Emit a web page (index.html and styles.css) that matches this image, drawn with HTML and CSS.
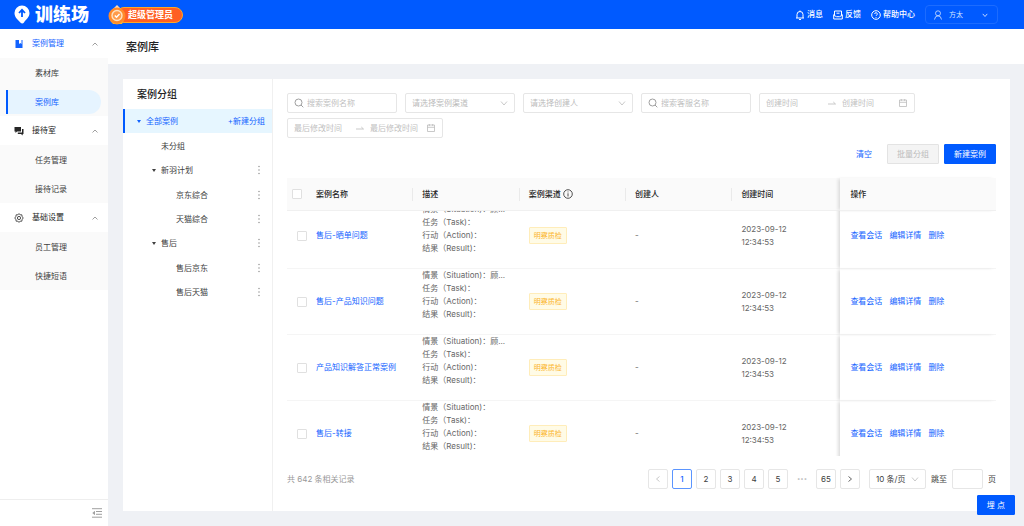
FILE: index.html
```html
<!DOCTYPE html>
<html lang="zh-CN">
<head>
<meta charset="utf-8">
<title>案例库</title>
<link rel="stylesheet" href="styles.css">
</head>
<body>
<svg class="defs" aria-hidden="true">
  <symbol id="i-up" viewBox="0 0 8 8"><path d="M1.500 5.500 4 3l2.500 2.500" /></symbol>
  <symbol id="i-down" viewBox="0 0 8 8"><path d="M1 2.500 4 6l3-3.500" /></symbol>
  <symbol id="i-left" viewBox="0 0 8 8"><path d="M5.500 1.500 2.500 4l3 2.500" /></symbol>
  <symbol id="i-right" viewBox="0 0 8 8"><path d="M2.500 1.500 5.500 4l-3 2.500" /></symbol>
  <symbol id="i-search" viewBox="0 0 10 10"><circle cx="4.500" cy="4.500" r="3.500" /><path d="M7 7l2.300 2.300" /></symbol>
  <symbol id="i-cal" viewBox="0 0 10 10"><path d="M1.500 2h7v6.500h-7zM1.500 4.300h7M3.300 1v2M6.700 1v2" /></symbol>
  <symbol id="i-arrow" viewBox="0 0 8 8"><path d="M0 5h7.500L5.300 3" /></symbol>
  <symbol id="i-more" viewBox="0 0 4 10"><circle cx="2" cy="1.500" r=".7" /><circle cx="2" cy="5" r=".7" /><circle cx="2" cy="8.500" r=".7" /></symbol>
</svg>

<header class="topbar">
  <div class="brand">
    <svg class="brand-mark" viewBox="0 0 16 20"><path fill="#fff" d="M8 .5A7.500 7.500 0 0 1 15.500 8c0 4.500-3.500 6-5.500 9.500-.8 1.300-2.500 1.300-3.400.3L3 14C1.500 12.300.5 10.500.5 8A7.500 7.500 0 0 1 8 .5z"/><path d="M8 12V5M5 8l3-3.200L11 8" fill="none" stroke="#005aff" stroke-width="1.800"/></svg>
    <span class="brand-name">训练场</span>
  </div>
  <div class="role">
    <svg class="role-medal" viewBox="0 0 18 20"><path fill="#ffd9b0" d="M9 0l4 4H5z"/><circle cx="9" cy="11" r="8.500" fill="#ff8a2b"/><path d="M2 15a8.500 8.500 0 0 0 14 0l-2 4H5z" fill="#ffb52e"/><circle cx="9" cy="10.500" r="5" fill="#ff9b4a" stroke="#ffe3c2" stroke-width="1.400"/><path d="M6.800 10.500l1.700 1.700 3-3.200" fill="none" stroke="#fff" stroke-width="1.400"/></svg>
    <span class="role-name">超级管理员</span>
  </div>
  <nav class="topnav">
    <a href="#"><svg class="ico10" viewBox="0 0 10 10"><path d="M1 8h8M2 8V4.500a3 3 0 0 1 6 0V8M5 1.500V.5M4 9.500h2"/></svg>消息</a>
    <a href="#"><svg class="ico10" viewBox="0 0 10 10"><path d="M1.500 5V1h7v4M3.500 3.200h3M.7 4.500V9h8.600V4.500M.7 5.200l2.800 1.500h3l2.800-1.500"/></svg>反馈</a>
    <a href="#"><svg class="ico10" viewBox="0 0 10 10"><circle cx="5" cy="5" r="4.300"/><path d="M3.700 4a1.300 1.300 0 1 1 1.800 1.200Q5 5.500 5 6M5 7v.8"/></svg>帮助中心</a>
  </nav>
  <button class="user" type="button">
    <svg class="ico10" viewBox="0 0 10 10"><circle cx="5" cy="3.300" r="2.500"/><path d="M1.500 9.500Q2 5.800 5 5.800t3.500 3.700"/></svg>
    <span>方太</span>
    <svg class="ico6 push"><use href="#i-down"/></svg>
  </button>
</header>

<div class="shell">
  <aside class="sidebar">
    <nav class="menu">
      <button class="menu-head current" type="button"><svg class="ico10 solid" viewBox="0 0 10 10"><path d="M1.500 1H5v4l1.300-1L7.500 5V1h1v8h-7z"/></svg>案例管理<svg class="ico8 push"><use href="#i-up"/></svg></button>
      <div class="submenu"><a href="#">素材库</a><a href="#" class="active" aria-current="page">案例库</a></div>
      <button class="menu-head" type="button"><svg class="ico10 solid" viewBox="0 0 10 10"><path d="M.5 1h6.500v4.500H3L1.500 7V5.500h-1zM8 3h1.500v5h-.8v1.500L7 8H3.800V6.500H8z"/></svg>接待室<svg class="ico8 push"><use href="#i-up"/></svg></button>
      <div class="submenu"><a href="#">任务管理</a><a href="#">接待记录</a></div>
      <button class="menu-head" type="button"><svg class="ico10" viewBox="0 0 10 10"><path d="M5 .7l1.200 1 1.600.1.300 1.600L9.200 5 8.100 6.600l-.3 1.600-1.600.1-1.200 1-1.200-1-1.600-.1-.3-1.600L.8 5l1.100-1.600.3-1.600 1.600-.1z"/><circle cx="5" cy="5" r="1.600"/></svg>基础设置<svg class="ico8 push"><use href="#i-up"/></svg></button>
      <div class="submenu"><a href="#">员工管理</a><a href="#">快捷短语</a></div>
    </nav>
    <div class="side-foot">
      <button class="fold" type="button" aria-label="收起菜单"><svg class="ico10" viewBox="0 0 10 10"><path d="M0 .7h10M4 3.500h6M4 6.300h6M0 9.200h10M2.500 3.500v3L.8 5z"/></svg></button>
    </div>
  </aside>

  <main class="main">
    <h1 class="page-title">案例库</h1>
    <div class="card">
      <section class="groups">
        <h2>案例分组</h2>
        <div class="node root"><i class="caret"></i><span>全部案例</span><button class="link push" type="button">+新建分组</button></div>
        <ul class="tree">
          <li><div class="node lv1"><span>未分组</span></div></li>
          <li><div class="node lv1"><i class="caret"></i><span>新羽计划</span><button class="more" type="button" aria-label="更多"><svg><use href="#i-more"/></svg></button></div>
            <ul class="tree">
              <li><div class="node lv2"><span>京东综合</span><button class="more" type="button" aria-label="更多"><svg><use href="#i-more"/></svg></button></div></li>
              <li><div class="node lv2"><span>天猫综合</span><button class="more" type="button" aria-label="更多"><svg><use href="#i-more"/></svg></button></div></li>
            </ul></li>
          <li><div class="node lv1"><i class="caret"></i><span>售后</span><button class="more" type="button" aria-label="更多"><svg><use href="#i-more"/></svg></button></div>
            <ul class="tree">
              <li><div class="node lv2"><span>售后京东</span><button class="more" type="button" aria-label="更多"><svg><use href="#i-more"/></svg></button></div></li>
              <li><div class="node lv2"><span>售后天猫</span><button class="more" type="button" aria-label="更多"><svg><use href="#i-more"/></svg></button></div></li>
            </ul></li>
        </ul>
      </section>

      <section class="content">
        <form class="filters">
          <label class="field"><svg class="ico10 dark"><use href="#i-search"/></svg><input type="text" placeholder="搜索案例名称" aria-label="搜索案例名称"></label>
          <label class="field"><select aria-label="案例渠道"><option>请选择案例渠道</option></select><svg class="ico8"><use href="#i-down"/></svg></label>
          <label class="field"><select aria-label="创建人"><option>请选择创建人</option></select><svg class="ico8"><use href="#i-down"/></svg></label>
          <label class="field"><svg class="ico10 dark"><use href="#i-search"/></svg><input type="text" placeholder="搜索客服名称" aria-label="搜索客服名称"></label>
          <div class="field range"><input type="text" placeholder="创建时间" aria-label="创建时间起"><svg class="ico8"><use href="#i-arrow"/></svg><input class="until" type="text" placeholder="创建时间" aria-label="创建时间止"><svg class="ico10"><use href="#i-cal"/></svg></div>
          <div class="field range"><input type="text" placeholder="最后修改时间" aria-label="最后修改时间起"><svg class="ico8"><use href="#i-arrow"/></svg><input class="until" type="text" placeholder="最后修改时间" aria-label="最后修改时间止"><svg class="ico10"><use href="#i-cal"/></svg></div>
        </form>

        <div class="actions">
          <button class="link clear" type="button">清空</button>
          <button class="btn" type="button" disabled>批量分组</button>
          <button class="btn primary" type="button">新建案例</button>
        </div>

        <div class="grid">
          <table class="table head">
            <colgroup><col class="c-check"><col class="c-data"><col class="c-data"><col class="c-data"><col class="c-data"><col class="c-date"><col></colgroup>
            <thead><tr>
              <th><input type="checkbox" aria-label="全选"></th>
              <th><div class="sep">案例名称</div></th>
              <th><div class="sep">描述</div></th>
              <th><div class="sep">案例渠道<svg class="ico10" viewBox="0 0 10 10"><circle cx="5" cy="5" r="4.300"/><path d="M5 4.300v3.200M5 2.500v.9"/></svg></div></th>
              <th><div class="sep">创建人</div></th>
              <th>创建时间</th>
              <th class="pinned">操作</th>
            </tr></thead>
          </table>
          <div class="viewport">
            <table class="table body">
              <colgroup><col class="c-check"><col class="c-data"><col class="c-data"><col class="c-data"><col class="c-data"><col class="c-date"><col></colgroup>
              <tbody>
                <tr><td><input type="checkbox" aria-label="选择"></td><td><a href="#">售后-晒单问题</a></td><td class="desc">情景（Situation)：顾...<br>任务（Task)：<br>行动（Action)：<br>结果（Result)：</td><td><span class="tag">明察质检</span></td><td>-</td><td>2023-09-12<br>12:34:53</td><td class="pinned"><a href="#">查看会话</a><a href="#">编辑详情</a><a href="#">删除</a></td></tr>
                <tr><td><input type="checkbox" aria-label="选择"></td><td><a href="#">售后-产品知识问题</a></td><td class="desc">情景（Situation)：顾...<br>任务（Task)：<br>行动（Action)：<br>结果（Result)：</td><td><span class="tag">明察质检</span></td><td>-</td><td>2023-09-12<br>12:34:53</td><td class="pinned"><a href="#">查看会话</a><a href="#">编辑详情</a><a href="#">删除</a></td></tr>
                <tr><td><input type="checkbox" aria-label="选择"></td><td><a href="#">产品知识解答正常案例</a></td><td class="desc">情景（Situation)：顾...<br>任务（Task)：<br>行动（Action)：<br>结果（Result)：</td><td><span class="tag">明察质检</span></td><td>-</td><td>2023-09-12<br>12:34:53</td><td class="pinned"><a href="#">查看会话</a><a href="#">编辑详情</a><a href="#">删除</a></td></tr>
                <tr><td><input type="checkbox" aria-label="选择"></td><td><a href="#">售后-转接</a></td><td class="desc">情景（Situation)：<br>任务（Task)：<br>行动（Action)：<br>结果（Result)：</td><td><span class="tag">明察质检</span></td><td>-</td><td>2023-09-12<br>12:34:53</td><td class="pinned"><a href="#">查看会话</a><a href="#">编辑详情</a><a href="#">删除</a></td></tr>
              </tbody>
            </table>
          </div>
        </div>

        <footer class="pager">
          <span class="total">共 642 条相关记录</span>
          <nav class="pages">
            <button class="page off" type="button" aria-label="上一页" disabled><svg class="ico8"><use href="#i-left"/></svg></button>
            <button class="page on" type="button">1</button>
            <button class="page" type="button">2</button>
            <button class="page" type="button">3</button>
            <button class="page" type="button">4</button>
            <button class="page" type="button">5</button>
            <span class="dots">•••</span>
            <button class="page" type="button">65</button>
            <button class="page" type="button" aria-label="下一页"><svg class="ico8"><use href="#i-right"/></svg></button>
          </nav>
          <label class="field size"><select aria-label="每页条数"><option>10 条/页</option></select><svg class="ico8"><use href="#i-down"/></svg></label>
          <label class="jump">跳至<input type="text">页</label>
        </footer>
      </section>
    </div>
  </main>
</div>
<button class="btn primary float" type="button">埋 点</button>
</body>
</html>
```
FILE: styles.css
```css
* { box-sizing: border-box; }
body {
  margin: 0;
  height: 100vh;
  display: flex;
  flex-direction: column;
  overflow: hidden;
  font: 8px/13px Inter, "Noto Sans CJK SC", sans-serif;
  color: #404040;
  background: #eff1f5;
}
button, input, select { font: inherit; color: inherit; margin: 0; padding: 0; border: 0; background: none; outline: 0; }
a { color: #1263ff; text-decoration: none; }
h1, h2, ul { margin: 0; padding: 0; list-style: none; }
svg { fill: none; stroke: currentColor; stroke-width: 0.8; flex: none; }
.defs { position: absolute; width: 0; height: 0; }
.ico6 { width: 6px; height: 6px; }
.ico8 { width: 8px; height: 8px; }
.ico10 { width: 10px; height: 10px; }
.solid { fill: currentColor; stroke: none; }
.push { margin-left: auto; }
.link { color: #1263ff; }

/* Top bar */
.topbar { flex: none; height: 29px; display: flex; align-items: center; padding: 0 26px 0 14px; background: #005aff; color: #fff; }
.brand { display: flex; align-items: center; gap: 5px; width: 94px; }
.brand-mark { width: 16px; height: 20px; stroke: none; }
.brand-name { font-size: 18px; line-height: 20px; font-weight: 900; white-space: nowrap; }
.role { display: flex; align-items: center; }
.role-medal { width: 18px; height: 20px; stroke: none; z-index: 1; }
.role-name { margin-left: -10px; padding: 0 9px 0 11px; border: 1px solid #ffa726; border-radius: 8px; background: #ff5f24; font-size: 9px; line-height: 14px; font-weight: 700; }
.topnav { margin-left: auto; display: flex; gap: 10px; }
.topnav a { display: flex; align-items: center; gap: 2px; color: #fff; font-weight: 500; }
.topnav svg { stroke-width: 1; }
.user { display: flex; align-items: center; width: 73px; height: 19px; margin-left: 10px; padding: 0 9px 0 7px; gap: 6px; border: 1px solid #1c6cff; border-radius: 4px; font-size: 7px; color: #d4e3ff; }
.user .push { stroke-width: 1.2; overflow: visible; }

/* Side menu */
.shell { flex: 1; min-height: 0; display: flex; }
.sidebar { width: 108px; flex: none; display: flex; flex-direction: column; background: #fff; }
.menu { flex: 1; }
.menu-head { display: flex; align-items: center; width: 100%; height: 29px; padding: 0 9px 0 14px; text-align: left; color: #262626; }
.menu-head .ico10 { margin-right: 8px; }
.menu-head .push { color: #888; }
.menu-head.current { color: #1263ff; }
.submenu { display: flex; flex-direction: column; gap: 5px; padding: 3px 7px 2px 6px; background: #fafafa; }
.submenu a { height: 24px; line-height: 24px; padding-left: 27px; border-left: 2px solid transparent; color: #404040; }
.submenu .active { color: #1263ff; background: #e6f4ff; border-left-color: #005aff; border-radius: 0 12px 12px 0; }
.side-foot { display: flex; justify-content: flex-end; align-items: center; height: 27px; padding-right: 6px; border-top: 1px solid #eee; }
.fold { display: flex; color: #888; }

.main { flex: 1; min-width: 0; display: flex; flex-direction: column; }
.page-title { height: 35px; padding-left: 18px; background: #fff; font-size: 11px; line-height: 36px; font-weight: 500; color: #222; }
.card { flex: 1; min-height: 0; display: flex; margin: 15px 14px 15px 15px; background: #fff; }

/* Group tree */
.groups { flex: none; width: 150px; border-right: 1px solid #f0f0f0; }
.groups h2 { padding-left: 14px; font-size: 10px; line-height: 30px; font-weight: 500; color: #222; }
.node { display: flex; align-items: center; height: 24px; padding-right: 7px; }
.caret { margin-right: 5px; border: 2px solid transparent; border-top: 3px solid currentColor; border-bottom: 0; }
.root { padding-left: 12px; border-left: 2px solid #005aff; background: #e6f6ff; color: #1263ff; }
.tree { margin-top: 1px; }
.lv1 { padding-left: 29px; }
.lv1 > span:first-child { padding-left: 9px; }
.lv2 { padding-left: 53px; }
.more { display: flex; margin-left: auto; padding: 0 4px; color: #888; }
.more svg { width: 4px; height: 10px; fill: currentColor; stroke: none; }

/* Filters */
.content { flex: 1; min-width: 0; display: flex; flex-direction: column; padding: 14px; }
.filters { display: flex; flex-wrap: wrap; gap: 5px 8px; }
.field { display: flex; align-items: center; width: 110px; height: 20px; padding: 0 6px; gap: 3px; border: 1px solid #e6e6e6; border-radius: 2px; color: #bbb; }
.field input, .field select { flex: 1; min-width: 0; width: 0; appearance: none; }
.dark { color: #888; }
input::placeholder { color: #bfbfbf; opacity: 1; }
.range { width: 156px; gap: 6px; }
.range .until { flex: 0 0 50px; }

.actions { display: flex; justify-content: flex-end; gap: 5px; margin-top: 6px; }
.clear { margin-right: 10px; }
.btn { height: 20px; padding: 0 9px; border: 1px solid #d9d9d9; border-radius: 1px; white-space: nowrap; }
.btn:disabled { color: #bbb; background: #f4f4f4; border-color: #e3e3e3; }
.primary { color: #fff; background: #005aff; border-color: #005aff; }

/* Case table */
.grid { flex: 1; min-height: 0; display: flex; flex-direction: column; margin-top: 14px; }
.table { width: 100%; table-layout: fixed; border-collapse: separate; border-spacing: 0; }
.c-check { width: 20px; }
.c-data { width: 15%; }
.c-date { width: 108px; }
.table th { height: 33px; padding: 0 0 0 9px; text-align: left; font-weight: 500; color: #262626; background: #fafafa; border-bottom: 1px solid #f0f0f0; }
.table th:first-child { padding-left: 5px; }
.sep { display: flex; align-items: center; gap: 2px; border-right: 1px solid #eaeaea; }
.table input { display: block; appearance: none; width: 10px; height: 10px; border: 1px solid #e0e0e0; border-radius: 1px; background: #fff; }
.viewport { flex: 1; min-height: 0; overflow: hidden; }
.body { margin-top: -8px; }
.table td { height: 66px; padding: 0 0 0 9px; color: #666; border-bottom: 1px solid #f5f5f5; }
.table td:first-child { padding-left: 10px; }
.table .desc { vertical-align: top; white-space: nowrap; }
.table .pinned { padding-left: 10px; box-shadow: -3px 0 3px -1px #ddd; }
.pinned a { margin-right: 7px; }
.tag { display: inline-block; padding: 0 4px; border: 1px solid #ffedba; border-radius: 1px; background: #fffbe6; color: #fbb52d; font-size: 7px; line-height: 15px; }

/* Pagination */
.pager { display: flex; align-items: center; margin-top: 13px; padding-bottom: 8px; }
.total { color: #999; }
.pages { display: flex; gap: 4px; margin-left: auto; }
.page { display: flex; align-items: center; justify-content: center; width: 20px; height: 20px; border: 1px solid #e6e6e6; border-radius: 2px; }
.page.on { border-color: #5b95ff; color: #1263ff; font-weight: 500; }
.page.off { color: #bbb; }
.dots { width: 20px; font-size: 6px; line-height: 20px; text-align: center; color: #bbb; }
.size { width: 57px; margin-left: 9px; gap: 0; color: #bbb; }
.size select { color: #404040; }
.jump { display: flex; align-items: center; gap: 5px; margin-left: 5px; }
.jump input { width: 31px; height: 20px; border: 1px solid #e6e6e6; border-radius: 2px; }
.float { position: fixed; right: 9px; bottom: 11px; }
```
